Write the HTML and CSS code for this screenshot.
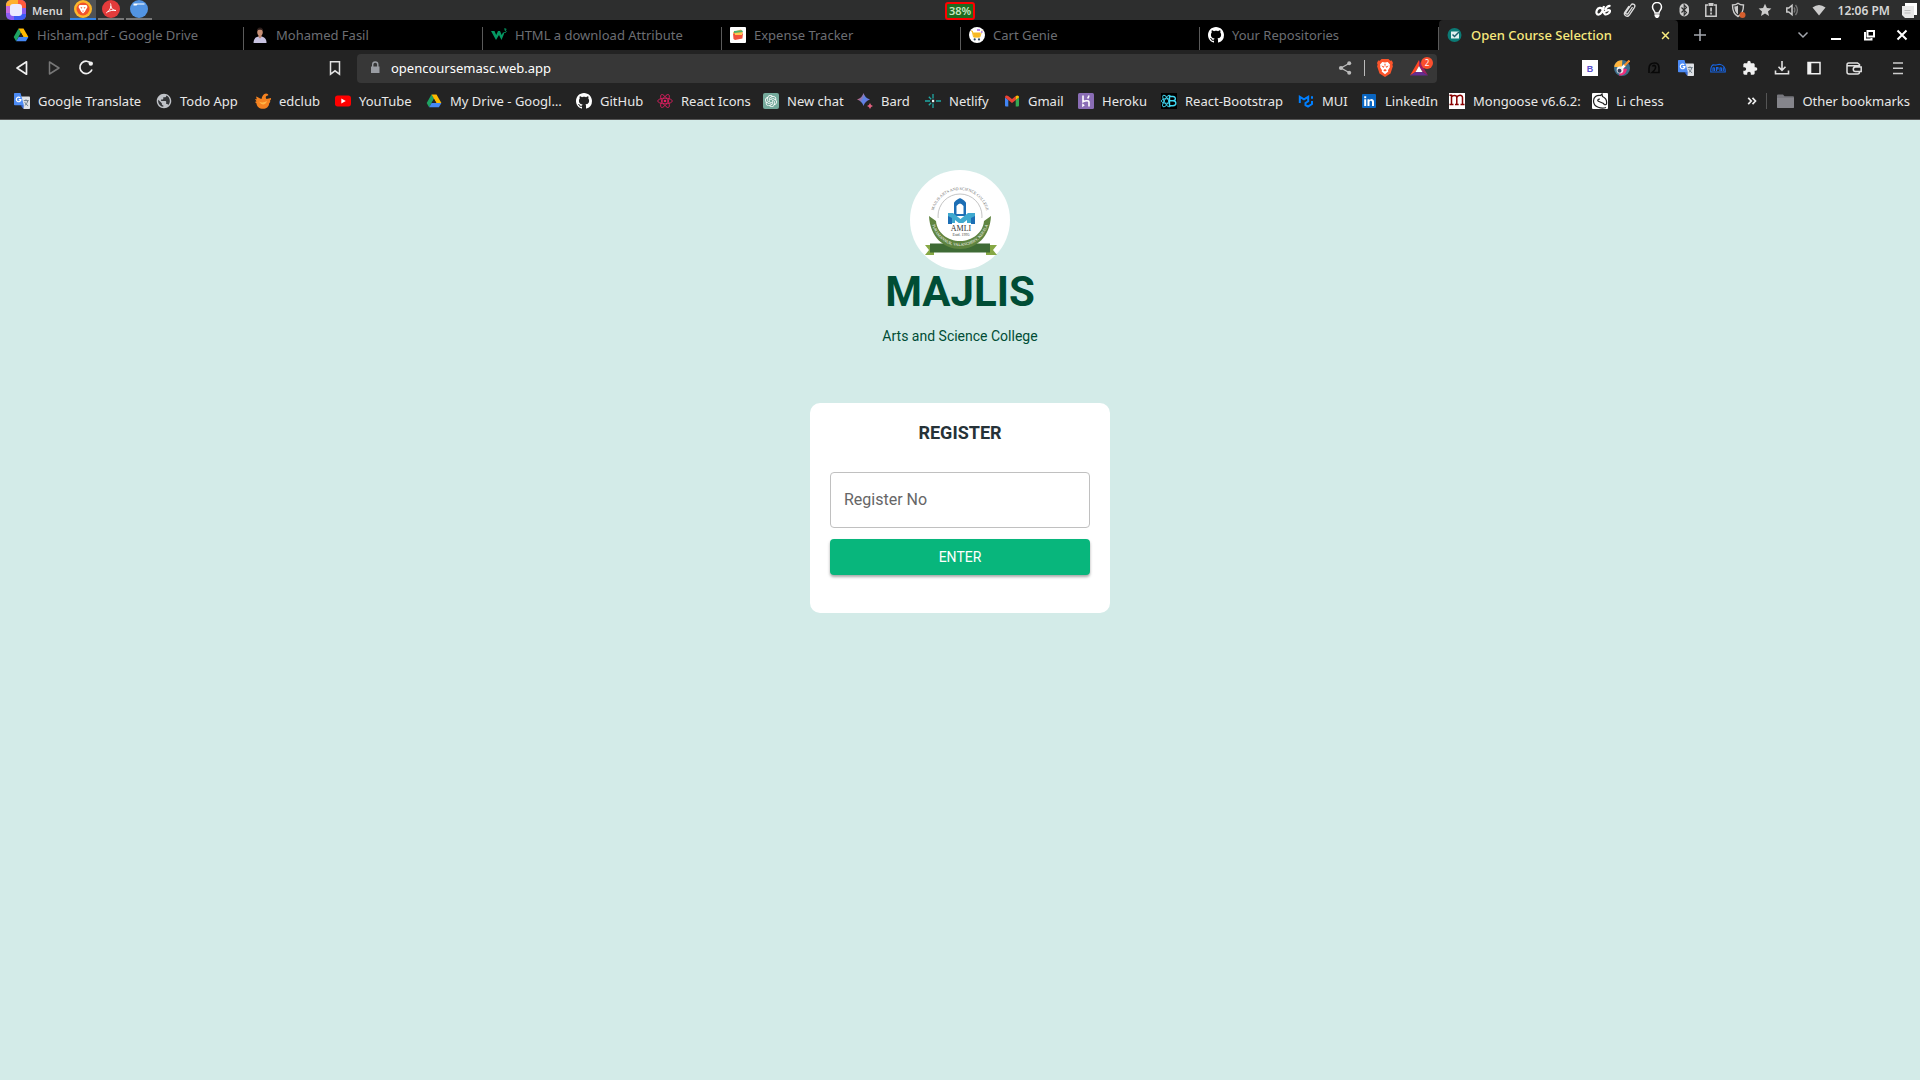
FILE: index.html
```html
<!DOCTYPE html>
<html lang="en">
<head>
<meta charset="utf-8">
<meta name="viewport" content="width=device-width, initial-scale=1">
<title>Open Course Selection</title>
<link rel="stylesheet" href="styles.css">
</head>
<body>
<svg class="sprite" aria-hidden="true">
  <symbol id="i-drive" viewBox="0 0 16 16">
    <path fill="#1ea362" d="M5.5 1.5 0.7 10l2.4 4.3L8 5.8z"/>
    <path fill="#ffba00" d="M5.5 1.5h5l4.9 8.6h-5z"/>
    <path fill="#4688f4" d="M3.1 14.3 5.6 10h9.8l-2.5 4.3z"/>
    <path fill="#232323" d="M8 5.9 10.3 10H5.6z"/>
  </symbol>
  <symbol id="i-github" viewBox="0 0 16 16">
    <path fill="#fff" d="M8 0C3.58 0 0 3.58 0 8c0 3.54 2.29 6.53 5.47 7.59.4.07.55-.17.55-.38 0-.19-.01-.82-.01-1.49-2.01.37-2.53-.49-2.69-.94-.09-.23-.48-.94-.82-1.13-.28-.15-.68-.52-.01-.53.63-.01 1.08.58 1.23.82.72 1.21 1.87.87 2.33.66.07-.52.28-.87.51-1.07-1.78-.2-3.64-.89-3.64-3.95 0-.87.31-1.59.82-2.15-.08-.2-.36-1.02.08-2.12 0 0 .67-.21 2.2.82.64-.18 1.32-.27 2-.27s1.36.09 2 .27c1.53-1.04 2.2-.82 2.2-.82.44 1.1.16 1.92.08 2.12.51.56.82 1.27.82 2.15 0 3.07-1.87 3.75-3.65 3.95.29.25.54.73.54 1.48 0 1.07-.01 1.93-.01 2.2 0 .21.15.46.55.38A8.01 8.01 0 0 0 16 8c0-4.42-3.58-8-8-8z"/>
  </symbol>
  <symbol id="i-translate" viewBox="0 0 16 16">
    <path fill="#dfe1e5" d="M6 3.5h9.2a.8.8 0 0 1 .8.8v10.9a.8.8 0 0 1-.8.8H9.5z"/>
    <path fill="none" stroke="#6b7b86" stroke-width="1" d="M9.800 7.600h4.900M12 6.400v1.200M13.800 7.600c-.4 2.200-1.700 3.900-3 4.900M10.800 9.200c.7 1.500 1.700 2.700 3.300 3.500"/>
    <path fill="#4c8bf5" d="M.8 0h5.700l3.400 12.300H.8a.8.8 0 0 1-.8-.8V.8A.8.8 0 0 1 .8 0z"/>
    <path fill="#3367d6" d="M6.600 12.300h3.300L9.300 16z"/>
    <path fill="none" stroke="#fff" stroke-width="1.200" d="M6.200 4.800A2.300 2.300 0 1 0 6.900 6.600H4.700"/>
  </symbol>
  <symbol id="i-brave" viewBox="0 0 16 18">
    <path fill="#fb542b" d="M4.500 0h7l1.700 1.700 1.600-.2L16 4l-.6 1.800.5 1.500-2.400 7.200L8 18l-5.500-3.500L.1 7.300l.5-1.500L0 4l1.200-2.500 1.600.2z"/>
    <path fill="#fff" d="M8 3.500l2.700-.6 2.300 2.500-.4 1.800.4.900-2 3.200.3 1.300L8 15.200l-3.300-2.600.3-1.300L3 8.100l.4-.9L3 5.400l2.300-2.500z"/>
    <path fill="#fb542b" d="M4.300 6.600l2.900.8-.8 1.500zM11.700 6.600l-2.900.8.800 1.500zM6.200 11.200L8 10l1.800 1.200L8 12.400zM7.300 4.800h1.400L8 8.500z"/>
  </symbol>
</svg>

<header class="panel">
  <button class="menu" type="button">
    <svg class="menu-icon" viewBox="0 0 20 20" aria-hidden="true">
      <rect width="20" height="20" rx="5" fill="#8b5cf0"/>
      <path fill="#ffb02e" d="M5 0h8v6H0V5a5 5 0 0 1 5-5z"/><path fill="#ff5a3c" d="M12 0h3a5 5 0 0 1 5 5v3h-8z"/>
      <path fill="#c56ae0" d="M0 6h6v7H0z"/><path fill="#3d5cf5" d="M8 14h12v1a5 5 0 0 1-5 5H8z"/>
      <rect x="4" y="4" width="12" height="12" rx="3" fill="#eceaff"/>
    </svg>
    Menu
  </button>
  <nav class="tasks" aria-label="Running applications">
    <button class="task task-active" type="button" aria-label="Brave">
      <svg viewBox="0 0 18 18"><circle cx="9" cy="9" r="9" fill="#fcb82c"/><circle cx="9" cy="9" r="6.500" fill="#f1532c"/><path fill="#fff" d="M5.500 5h7l1 2L11 11.500 9 13.500l-2-2L4.500 7z"/><path fill="#f1532c" d="M6.300 7l2 .5-.6 1.300zM11.700 7l-2 .5.6 1.300zM8 10.800h2l-1 .9z"/></svg>
    </button>
    <button class="task" type="button" aria-label="Document viewer">
      <svg viewBox="0 0 18 18"><circle cx="9" cy="9" r="9" fill="#e33b3b"/><path fill="none" stroke="#fff" d="M8.500 3.500c1 3 .3 6-4.300 9.500M8.700 6c.8 3 2.500 4.500 5.300 4.500-3-.6-5.500 0-8.300 1.300"/></svg>
    </button>
    <button class="task" type="button" aria-label="Files">
      <svg viewBox="0 0 18 18"><circle cx="9" cy="9" r="9" fill="#5294e2"/><path fill="#fff" d="M3.500 3.500h11v1h-7L6.500 5.500h-3z"/></svg>
    </button>
  </nav>
  <output class="battery">38%</output>
  <div class="tray">
    <svg viewBox="0 0 16 16"><path fill="none" stroke="#fff" stroke-width="2.200" d="M9 4C8 8 6.500 12 4 12.500S.8 10.500 2 8s4.500-3 5.500-.5S9 12.500 11 12.500s4-2 4-3.500-3-1-5.500 1M15.500 4c-2.500-.5-4 1-5.500 4"/></svg>
    <svg viewBox="0 0 16 16"><path fill="none" stroke="#ddd" stroke-width="1.300" d="M10.500 5 6 11.500c-1 1.300-2.800.1-2-1.300L9 3c1.600-2.200 5-.2 3.500 2.300L7.300 13c-2 2.700-6.300.2-4.400-2.900L7 4"/></svg>
    <svg viewBox="0 0 16 16"><path fill="none" stroke="#fff" stroke-width="1.500" d="M6 11c0-2-2.500-3-2.500-6a4.500 4.500 0 0 1 9 0c0 3-2.500 4-2.500 6z"/><path fill="#fff" d="M5.500 12.300h5V14l-1.500 2H7l-1.500-2z"/></svg>
    <svg viewBox="0 0 16 16"><rect x="3.500" y="1.500" width="9.500" height="13" rx="4.700" fill="#ccc"/><path fill="none" stroke="#2d2e2e" stroke-width="1.100" d="m5.500 5.500 5 5L8.200 13V3l2.300 2.500-5 5"/></svg>
    <svg viewBox="0 0 16 16"><path fill="none" stroke="#ccc" stroke-width="1.500" d="M5 3H2.800v11.200h10.400V3H11"/><path fill="#ccc" d="M5.500 1h5v3h-5zM7.200 5.500h1.700v4H7.200zM7.200 10.600h1.700v1.800H7.200z"/></svg>
    <svg viewBox="0 0 16 16"><path fill="none" stroke="#ccc" stroke-width="1.400" d="M8 1.300c1.500 1.200 3.500 1.700 5.500 1.700 0 6-1.500 9.500-5.500 11.500C4 12.500 2.500 9 2.500 3 4.500 3 6.500 2.500 8 1.300z"/><path fill="#ccc" d="M8 3.500v9C5.500 11 4.500 8 4.300 4.500 5.700 4.400 7 4.100 8 3.500z"/><circle cx="12.500" cy="13" r="3" fill="#d65f2e"/></svg>
    <svg viewBox="0 0 16 16"><path fill="#ccc" d="m8 1.700 1.900 4.200 4.500.5-3.400 3 1 4.500L8 11.600 4 13.900l1-4.500-3.400-3 4.500-.5z"/></svg>
    <svg viewBox="0 0 16 16"><path fill="none" stroke="#ccc" stroke-width="1.500" d="M2.800 6h2L8 3.300v9.400L4.800 10h-2z"/><path fill="none" stroke="#777" stroke-width="1.300" d="M10 5.500q1.800 2.500 0 5M11.500 3q3.800 5 0 10"/></svg>
    <svg viewBox="0 0 16 16"><path fill="#ccc" d="M1.500 5.500Q8 .5 14.500 5.500L8 13.500z"/></svg>
    <time class="clock">12:06 PM</time>
    <svg viewBox="0 0 16 16"><path fill="#fff" d="M4 1h12v12h-3V4H4z"/><path fill="#e8e8e8" d="M1 4h12v12H4l-3-3z"/><path stroke="#bbb" d="M3.500 8.500h6M3.500 11h6"/></svg>
  </div>
</header>

<div class="tabstrip">
  <nav class="tabs" aria-label="Tabs">
    <button class="tab" type="button"><svg class="icon" viewBox="0 0 16 16"><use href="#i-drive"/></svg>Hisham.pdf - Google Drive</button>
    <button class="tab" type="button"><svg class="icon" viewBox="0 0 16 16"><path fill="#c7c2e0" d="M1.500 16c0-4 2-6 5-6.500h3c3 .5 5 2.500 5 6.500z"/><path fill="#b98068" d="M6.500 7h3v3L8 11.500 6.500 10z"/><ellipse cx="8" cy="5" rx="2.800" ry="3.700" fill="#c68f75"/><path fill="#2b1d1a" d="M5 5c-.5-3 1-4.600 3-4.600S11.500 2 11 5c-.5-2-1-2.300-3-2.300S5.500 3 5 5z"/></svg>Mohamed Fasil</button>
    <button class="tab" type="button"><svg class="icon" viewBox="0 0 16 16"><path fill="#059862" d="M0 4h3.500l1.700 4L7 4h2l1.700 4 1.500-3 1 1.500L10.500 13 8 8l-3 5z"/><path fill="none" stroke="#059862" stroke-width="1" d="M13 2h2.200L14 3.500c2 0 1.500 2.500-.8 2"/></svg>HTML a download Attribute</button>
    <button class="tab" type="button"><svg class="icon" viewBox="0 0 16 16"><rect width="16" height="16" rx="1" fill="#fff"/><path fill="#ffb54a" d="m3 5 8-2.500 2 3.500-9 2z"/><path fill="#4caf6e" d="m4 4 8-.8 1 1.800-9 1z"/><path fill="#f0503c" d="M3 6.500h10l-.6 5L5 13l-1.500-1z"/><path fill="#ffc94f" d="M5 6h7v2H5z"/></svg>Expense Tracker</button>
    <button class="tab" type="button"><svg class="icon" viewBox="0 0 16 16"><circle cx="8" cy="8" r="8" fill="#fff"/><path fill="#f7b924" d="M3.500 5.500h8l-.9 4.800H5z"/><path fill="none" stroke="#f7b924" d="M2 4h1.300l1.200 6h6.300L13 3.500"/><circle cx="5.700" cy="12.400" r="1.100" fill="#2f4a68"/><circle cx="10" cy="12.400" r="1.100" fill="#2f4a68"/><path fill="#b98be8" d="M8 2h3v2H8zM12 4h1.500v2H12z"/></svg>Cart Genie</button>
    <button class="tab" type="button"><svg class="icon" viewBox="0 0 16 16"><use href="#i-github"/></svg>Your Repositories</button>
    <button class="tab tab-active" type="button"><svg class="icon" viewBox="0 0 16 16"><circle cx="7.500" cy="8" r="7" fill="#0b7a75"/><path fill="#dfeeee" d="M4 4.500h8v7H4z"/><path fill="none" stroke="#1d5f6b" stroke-width="1.500" d="m5.500 7.500 2 2L12 5"/></svg><span class="tab-title">Open Course Selection</span><svg class="tab-close" viewBox="0 0 10 10"><path stroke="#f9ea7e" stroke-width="1.700" d="m1.200 1.200 7.600 7.600M8.800 1.200 1.200 8.800"/></svg></button>
    <button class="new-tab" type="button" aria-label="New tab"><svg viewBox="0 0 12 12"><path stroke="#a3a6ad" stroke-width="1.600" d="M6 0v12M0 6h12"/></svg></button>
  </nav>
  <div class="window-controls">
    <button type="button" aria-label="Search tabs"><svg viewBox="0 0 12 12"><path fill="none" stroke="#a3a6ad" stroke-width="1.500" d="m1.500 3.500 4.500 4.500 4.500-4.500"/></svg></button>
    <button type="button" aria-label="Minimize"><svg viewBox="0 0 12 12"><path stroke="#fff" stroke-width="2" d="M1 10h10"/></svg></button>
    <button type="button" aria-label="Restore"><svg viewBox="0 0 12 12"><path fill="none" stroke="#fff" stroke-width="2" d="M4.500 2H11v5.500H4.500zM3 4H2v6.500h6.500V9"/></svg></button>
    <button type="button" aria-label="Close"><svg viewBox="0 0 12 12"><path stroke="#fff" stroke-width="2" d="m1.500 1.500 9 9M10.500 1.500l-9 9"/></svg></button>
  </div>
</div>

<div class="toolbar">
  <div class="nav-buttons">
    <button type="button" aria-label="Back"><svg viewBox="0 0 16 16"><path fill="none" stroke="#f0f0f0" stroke-width="1.700" stroke-linejoin="round" d="M12.500 1.800v12.400L3 8z"/></svg></button>
    <button type="button" aria-label="Forward"><svg viewBox="0 0 16 16"><path fill="none" stroke="#777" stroke-width="1.500" stroke-linejoin="round" d="M3.500 2v12L13 8z"/></svg></button>
    <button type="button" aria-label="Reload"><svg viewBox="0 0 16 16"><path fill="none" stroke="#f0f0f0" stroke-width="1.700" d="M13.200 3.800A6.200 6.200 0 1 0 14 9.500"/><circle cx="12.800" cy="3.600" r="2.200" fill="#f0f0f0"/></svg></button>
    <button class="bookmark-page" type="button" aria-label="Bookmark this page"><svg viewBox="0 0 16 16"><path fill="none" stroke="#e0e0e0" stroke-width="1.500" d="M3.500 1.800h9v12.400L8 10.800l-4.500 3.400z"/></svg></button>
  </div>
  <div class="address">
    <svg class="icon" viewBox="0 0 16 16" aria-hidden="true"><path fill="#9a9da3" d="M4 6.500h8.500V13H4z"/><path fill="none" stroke="#9a9da3" stroke-width="1.400" d="M5.700 7V4.500a2.550 2.550 0 0 1 5.100 0V7"/></svg>
    <input class="url" type="text" value="opencoursemasc.web.app" aria-label="Address">
    <button type="button" aria-label="Share"><svg viewBox="0 0 16 16"><path fill="none" stroke="#bbb" stroke-width="1.300" d="M12 3.500 4 8l8 4.500"/><circle cx="12.200" cy="3.300" r="2" fill="#bbb"/><circle cx="4" cy="8" r="2.100" fill="#bbb"/><circle cx="12.200" cy="12.700" r="2" fill="#bbb"/></svg></button>
    <span class="address-rule"></span>
    <button type="button" aria-label="Brave Shields"><svg class="shield" viewBox="0 0 16 18"><use href="#i-brave"/></svg></button>
    <button class="rewards" type="button" aria-label="Brave Rewards, 2 new"><svg class="shield" viewBox="0 0 18 18"><path fill="#ff4724" d="M9 1 0 16.500 5.500 13 9 7z"/><path fill="#9e1f63" d="M9 1v6l3.500 6 5.500 3.500z"/><path fill="#662d91" d="M0 16.500 5.500 13h7l5.500 3.500z"/><path fill="#fff" d="m9 7 3.500 6h-7z"/></svg><span class="badge">2</span></button>
  </div>
  <div class="extensions">
    <button type="button" aria-label="Extension B"><svg viewBox="0 0 16 16"><path fill="#fff" d="M0 0h16v16H0z"/><text x="8" y="11.500" class="glyph-b">B</text></svg></button>
    <button type="button" aria-label="Color picker"><svg viewBox="0 0 16 16"><circle cx="8" cy="8" r="8" fill="#3c6e8a"/><path fill="#ffb43c" d="M.3 7c0-4 4-7 8-6.700L8 7z"/><path fill="#ec2f7b" d="m7 8 6 1c-.5 4-3.500 7-8 6.500z"/><circle cx="6" cy="10" r="3.400" fill="#e8eef2"/><circle cx="5.500" cy="10.700" r="2" fill="#333a5a"/><path stroke="#fff" stroke-width="2.500" d="m8 8 3-3"/><path stroke="#f5902c" stroke-width="2.200" d="M10.500 5.500 15.500.5"/></svg></button>
    <button type="button" aria-label="Stylesheet inspector"><svg viewBox="0 0 16 16"><path fill="none" stroke="#080808" stroke-width="1.600" d="M3 13V8.500C3 5 5 3 8.500 3S13 5.500 13 8v4.500H6c2.500-2 4-4 3.500-6-.5-1.500-2.500-1.500-3 0"/></svg></button>
    <button type="button" aria-label="Google Translate"><svg viewBox="0 0 16 16"><use href="#i-translate"/></svg></button>
    <button type="button" aria-label="Incognito helper"><svg viewBox="0 0 16 16"><path fill="none" stroke="#1766e8" stroke-width="1.100" d="M.8 12C.5 6 2.500 4.500 4.500 5S8 4 10 4.500s5.500 1 5.200 7.500zM3 11V8q1.500-1 1.500 1.200V11M6.500 11V7.500H8V9H6.500M10 11V8q1.500-1 1.500 1.200V11M13.300 7.500V11"/></svg></button>
    <button type="button" aria-label="Extensions"><svg viewBox="0 0 24 24"><path fill="#f0f0f0" d="M20.500 11H19V7c0-1.100-.9-2-2-2h-4V3.500a2.500 2.500 0 0 0-5 0V5H4c-1.100 0-1.990.9-1.990 2v3.800H3.500c1.490 0 2.700 1.210 2.700 2.700s-1.210 2.700-2.700 2.700H2V20c0 1.100.9 2 2 2h3.800v-1.500c0-1.490 1.210-2.700 2.700-2.700s2.700 1.210 2.700 2.700V22H17c1.100 0 2-.9 2-2v-4h1.500a2.500 2.500 0 0 0 0-5z"/></svg></button>
    <button type="button" aria-label="Downloads"><svg viewBox="0 0 16 16"><path fill="none" stroke="#e0e0e0" stroke-width="1.600" d="M8 1v9M4.500 6.800 8 10.300l3.500-3.500M1.500 10.500v3.300h13v-3.300"/></svg></button>
    <button type="button" aria-label="Side panel"><svg viewBox="0 0 16 16"><path fill="none" stroke="#f0f0f0" stroke-width="1.500" d="M2 2.500h12v11.300H2z"/><path fill="#f0f0f0" d="M2 2.500h3.300v11.300H2z"/></svg></button>
    <button class="wallet" type="button" aria-label="Wallet"><svg viewBox="0 0 16 16"><path fill="none" stroke="#e0e0e0" stroke-width="1.500" d="M13.500 6.500V4.500L11.500 3H2.700Q1 3 1 5v7q0 2 2 2h8.500q2 0 2-2M1 5.700h12.500M9.500 7h5.700v4.500H9.500a2.250 2.250 0 0 1 0-4.500z"/></svg></button>
    <button class="main-menu" type="button" aria-label="Main menu"><svg viewBox="0 0 16 16"><path stroke="#ccc" stroke-width="1.500" d="M3 3h10M3 8.200h10M3 13.400h10"/></svg></button>
  </div>
</div>

<nav class="bookmarks" aria-label="Bookmarks">
  <div class="bookmark-list">
    <a href="#"><svg class="icon" viewBox="0 0 16 16"><use href="#i-translate"/></svg>Google Translate</a>
    <a href="#"><svg class="icon" viewBox="1 1 22 22"><circle cx="12" cy="12" r="8" fill="#343639"/><path fill="#bfc2c7" d="M12 2C6.480 2 2 6.480 2 12s4.480 10 10 10 10-4.480 10-10S17.520 2 12 2zm-1 17.930c-3.950-.49-7-3.850-7-7.930 0-.62.08-1.210.21-1.790L9 15v1c0 1.100.9 2 2 2v1.930zm6.900-2.540c-.26-.81-1-1.390-1.900-1.390h-1v-3c0-.55-.45-1-1-1H8v-2h2c.55 0 1-.45 1-1V7h2c1.100 0 2-.9 2-2v-.41c2.930 1.190 5 4.060 5 7.410 0 2.080-.8 3.970-2.100 5.390z"/></svg>Todo App</a>
    <a href="#"><svg class="icon" viewBox="0 0 16 16"><path fill="#f58220" d="M1 3.500c2 .5 3.500 2 5.500 2.500C7 3 8.500.5 11 .5c1.500 0 2.300.7 2.300 1.800L11.500 3c-1 .7-1 2 0 3L16 5c.3 1.500-.5 2-1 2.500.5 1.500 0 2-.8 2.800-.2 3.700-3 5.500-6 5.500-4 0-6.500-2.300-6.700-5.300L0 9l1.500-.7L0 6l1.800.3z"/><path fill="#ffb545" d="M4 8.500c2.500 1.500 5.500 1 8-.5-1 4-5.500 5-8 .5z"/></svg>edclub</a>
    <a href="#"><svg class="icon" viewBox="0 0 16 16"><rect y="2.500" width="16" height="11" rx="2.700" fill="#f00"/><path fill="#fff" d="m6.300 5.500 4.500 2.500-4.500 2.500z"/></svg>YouTube</a>
    <a href="#"><svg class="icon" viewBox="0 0 16 16"><use href="#i-drive"/></svg>My Drive - Googl…</a>
    <a href="#"><svg class="icon" viewBox="0 0 16 16"><use href="#i-github"/></svg>GitHub</a>
    <a href="#"><svg class="icon" viewBox="0 0 16 16"><g fill="none" stroke="#e91e63" stroke-width=".8"><ellipse cx="8" cy="8" rx="7.300" ry="2.800"/><ellipse cx="8" cy="8" rx="7.300" ry="2.800" transform="rotate(60 8 8)"/><ellipse cx="8" cy="8" rx="7.300" ry="2.800" transform="rotate(120 8 8)"/></g><circle cx="8" cy="8" r="1.300" fill="#e91e63"/></svg>React Icons</a>
    <a href="#"><svg class="icon" viewBox="-4 -4 32 32"><rect x="-4" y="-4" width="32" height="32" rx="4" fill="#74aa9c"/><path fill="#fff" d="M22.2819 9.8211a5.9847 5.9847 0 0 0-.5157-4.9108 6.0462 6.0462 0 0 0-6.5098-2.9A6.0651 6.0651 0 0 0 4.9807 4.1818a5.9847 5.9847 0 0 0-3.9977 2.9 6.0462 6.0462 0 0 0 .7427 7.0966 5.98 5.98 0 0 0 .511 4.9107 6.051 6.051 0 0 0 6.5146 2.9001A5.9847 5.9847 0 0 0 13.2599 24a6.0557 6.0557 0 0 0 5.7718-4.2058 5.9894 5.9894 0 0 0 3.9977-2.9001 6.0557 6.0557 0 0 0-.7475-7.0729zm-9.022 12.6081a4.4755 4.4755 0 0 1-2.8764-1.0408l.1419-.0804 4.7783-2.7582a.7948.7948 0 0 0 .3927-.6813v-6.7369l2.02 1.1686a.071.071 0 0 1 .038.052v5.5826a4.504 4.504 0 0 1-4.4945 4.4944zm-9.6607-4.1254a4.4708 4.4708 0 0 1-.5346-3.0137l.142.0852 4.783 2.7582a.7712.7712 0 0 0 .7806 0l5.8428-3.3685v2.3324a.0804.0804 0 0 1-.0332.0615L9.74 19.9502a4.4992 4.4992 0 0 1-6.1408-1.6464zM2.3408 7.8956a4.485 4.485 0 0 1 2.3655-1.9728V11.6a.7664.7664 0 0 0 .3879.6765l5.8144 3.3543-2.0201 1.1685a.0757.0757 0 0 1-.071 0l-4.8303-2.7865A4.504 4.504 0 0 1 2.3408 7.872zm16.5963 3.8558L13.1038 8.364 15.1192 7.2a.0757.0757 0 0 1 .071 0l4.8303 2.7913a4.4944 4.4944 0 0 1-.6765 8.1042v-5.6772a.79.79 0 0 0-.407-.667zm2.0107-3.0231l-.142-.0852-4.7735-2.7818a.7759.7759 0 0 0-.7854 0L9.409 9.2297V6.8974a.0662.0662 0 0 1 .0284-.0615l4.8303-2.7866a4.4992 4.4992 0 0 1 6.6802 4.66zM8.3065 12.863l-2.02-1.1638a.0804.0804 0 0 1-.038-.0567V6.0742a4.4992 4.4992 0 0 1 7.3757-3.4537l-.142.0805L8.704 5.459a.7948.7948 0 0 0-.3927.6813zm1.0976-2.3654l2.602-1.4998 2.6069 1.4998v2.9994l-2.5974 1.4997-2.6067-1.4997Z"/></svg>New chat</a>
    <a href="#"><svg class="icon" viewBox="0 0 16 16"><defs><linearGradient id="bard" x1="0" x2="1" y1=".2" y2=".8"><stop offset=".1" stop-color="#d9616b"/><stop offset=".5" stop-color="#5a86e8"/><stop offset="1" stop-color="#7a6ad8"/></linearGradient></defs><path fill="url(#bard)" d="M6.500 0Q8 5 13 6.500 8 8 6.500 13 5 8 0 6.500 5 5 6.500 0z"/><path fill="#e0607e" d="M13 10q.7 2.300 3 3-2.300.7-3 3-.7-2.300-3-3 2.300-.7 3-3z"/></svg>Bard</a>
    <a href="#"><svg class="icon" viewBox="0 0 16 16"><path stroke="#1fa9a5" stroke-width="1.300" d="M8 1v4.500M8 10.500V15M0 8h5M11 8h5M3.800 12.200l2.400-2.400M3.800 3.800l2.400 2.400"/><path fill="#e8f5f5" d="M7 6.800h2.200V9.200H7z"/></svg>Netlify</a>
    <a href="#"><svg class="icon" viewBox="0 0 16 16"><path fill="#4285f4" d="M1 4.500 4.300 7v6.500H2a1 1 0 0 1-1-1z"/><path fill="#34a853" d="M11.700 7 15 4.500v8a1 1 0 0 1-1 1h-2.300z"/><path fill="#ea4335" d="M1 4.500c0-2 1.800-2.500 3.200-1.400L8 6l3.800-2.900v3.900L8 10 4.300 7z"/><path fill="#fbbc04" d="M11.700 3.200C13.200 2 15 2.700 15 4.500L11.700 7z"/></svg>Gmail</a>
    <a href="#"><svg class="icon" viewBox="0 0 16 16"><rect width="16" height="16" rx="1.500" fill="#8a6db5"/><path fill="none" stroke="#fff" stroke-width="1.600" d="M5 2.500v6.300c2-1 6-2 6 .5v4.200M10.800 2.500q0 1.500-1.200 3"/><path fill="#fff" d="m4.200 10.300 2.600 2-2.600 2z"/></svg>Heroku</a>
    <a href="#"><svg class="icon" viewBox="0 0 16 16"><path d="M0 0h16v16H0z"/><g fill="none" stroke="#41d7f2" stroke-width=".9"><ellipse cx="5.500" cy="8" rx="5" ry="2.300"/><ellipse cx="5.500" cy="8" rx="6.500" ry="2.200" transform="rotate(60 5.500 8)"/><ellipse cx="5.500" cy="8" rx="6.500" ry="2.200" transform="rotate(120 5.500 8)"/></g><path fill="#000" stroke="#41d7f2" stroke-width="1.400" d="M8.500 3.500H12c3.300 0 3 4.300 0 4.300 3.800 0 3.800 4.900 0 4.900H8.500zM8.500 7.800H12"/></svg>React-Bootstrap</a>
    <a href="#"><svg class="icon" viewBox="0 0 16 16"><path fill="none" stroke="#007fff" stroke-width="2" d="M1.800 10V3.800L6 6.300l4.200-2.500v4.500L7.500 10v2.200L10 13.500l4-2.500V8"/><path fill="#007fff" d="M13 3.200h2v2.500h-2z"/></svg>MUI</a>
    <a href="#"><svg class="icon" viewBox="0 0 16 16"><rect x="1" y="1" width="14" height="14" rx="1" fill="#0a66c2"/><path fill="#fff" d="M3.200 6.200h2V13h-2zM3.200 3.200h2v2h-2zM6.500 6.200h2v1c1.500-2 4.500-1.200 4.500 1.500V13h-2V9.300c0-2-2.500-2-2.500 0V13h-2z"/></svg>LinkedIn</a>
    <a href="#"><svg class="icon" viewBox="0 0 16 16"><path fill="#fff" d="M0 0h16v16H0z"/><path fill="none" stroke="#800" stroke-width="1.500" d="M.5 2.200h2v9.500M2.500 4c1-2 5.300-2.500 5.300.5v7M7.800 4.500c1-2.700 5.700-3 5.700 0v7M.5 11.500h4M6 11.500h3.700M11.500 11.500h4"/></svg>Mongoose v6.6.2:</a>
    <a href="#"><svg class="icon" viewBox="0 0 16 16"><rect width="16" height="16" rx="1" fill="#fff"/><path fill="none" stroke="#222" stroke-width="1.200" d="M14 14.500C10 16 1.500 14.500 1.500 8c0-4 3-6 7-5.500L10 1l.5 2.500C14 5 15 8 14.500 11c-1.500 1.500-2.500.5-3-.5L7 8.500c-2-.5-1.500-2.500 1-2.500"/></svg>Li chess</a>
  </div>
  <button class="more" type="button" aria-label="More bookmarks"><svg viewBox="0 0 10 10"><path fill="none" stroke="#eee" stroke-width="1.700" d="m1.200 1.800 3 3.200-3 3.200M5.500 1.800l3 3.200-3 3.200"/></svg></button>
  <a class="other" href="#"><svg class="folder" viewBox="0 0 17 14"><path fill="#77777d" d="M0 1.500Q0 .5 1 .5h5l1.500 1.800H16q1 0 1 1V13q0 1-1 1H1q-1 0-1-1z"/><path fill="#85858b" d="M0 4h17v9q0 1-1 1H1q-1 0-1-1z"/></svg>Other bookmarks</a>
</nav>

<main class="page">
  <svg class="crest" viewBox="0 0 100 100" role="img" aria-label="AMLI crest">
    <defs>
      <path id="arc-top" d="M23 49V47a27 27 0 0 1 54 0v2"/>
      <path id="arc-bottom" d="M21 49C23 66 36 76 50 76S77 66 79 49"/>
    </defs>
    <circle cx="50" cy="50" r="50" fill="#fff"/>
    <circle cx="50" cy="46" r="22" fill="none" stroke="#aaa" stroke-width=".7"/>
    <path fill="#86a844" d="M15 75h9v10H15l4-5zM87 75H76v10h11l-4-5z"/>
    <path fill="#3f6b35" d="M20 73.500h60v9H20z"/>
    <path fill="#fff" d="M24 48h52v8C72 66 62 72 50 72S28 66 24 56z"/>
    <path fill="#5f8440" d="M19 46c1 21 15 33 31 33s30-12 31-33l-7 5c-1 12-12 20-24 20s-23-8-24-20z"/>
    <path fill="#1c6eb5" d="M44 46V33c0-2 6-5 6-5s6 3 6 5v13z"/>
    <path fill="#fff" d="M46.500 44V36q3.500-5 7 0v8z"/>
    <path fill="#3fa9cf" d="M38 43h5l7.500 6 7.500-6h7v10H38z"/>
    <path fill="#1c6eb5" d="M38 46l4 2v6h-4zM65 46l-4 2v6h4z"/>
    <path fill="#fff" d="M45 50l5 4h-5zM57 50l-5 4h5z"/>
    <text x="51" y="61" class="crest-name">AMLI</text>
    <text x="51" y="66" class="crest-year">Estd. 1995</text>
    <text class="crest-ring"><textPath href="#arc-top" startOffset="50%">MAJLIS ARTS AND SCIENCE COLLEGE</textPath></text>
    <text class="crest-ribbon"><textPath href="#arc-bottom" startOffset="50%">PURAMANNUR, VALANCHERY, KERALA</textPath></text>
  </svg>
  <h1 class="name">MAJLIS</h1>
  <p class="tagline">Arts and Science College</p>
  <form class="card">
    <h2 class="card-title">REGISTER</h2>
    <div class="field">
      <input class="field-input" id="register-no" type="text">
      <label class="field-label" for="register-no">Register No</label>
    </div>
    <button class="submit" type="button">ENTER</button>
  </form>
</main>
</body>
</html>
```
FILE: styles.css
```css
* {
  box-sizing: border-box;
}

body {
  margin: 0;
  min-height: 100vh;
  display: flex;
  flex-direction: column;
  background: #d3ebe8;
  font-family: "Noto Sans", sans-serif;
  font-size: 13px;
}

button,
input {
  font: inherit;
  color: inherit;
  border: 0;
  padding: 0;
  background: none;
}

a {
  color: inherit;
  text-decoration: none;
}

svg {
  display: block;
  flex: none;
}

.sprite {
  position: absolute;
  width: 0;
  height: 0;
}

.icon {
  width: 16px;
  height: 16px;
}

/* Desktop panel */
.panel {
  display: grid;
  grid-template-columns: 1fr auto 1fr;
  grid-template-areas: "left battery tray";
  height: 20px;
  background: #2d2e2e;
  color: #d6d6d6;
  font-size: 11px;
  font-weight: 600;
}

.menu {
  grid-area: left;
  justify-self: start;
  display: flex;
  align-items: center;
  gap: 6px;
  padding-left: 6px;
}

.menu-icon {
  width: 20px;
  height: 20px;
}

.tasks {
  grid-area: left;
  justify-self: start;
  display: flex;
  gap: 2px;
  margin-left: 70px;
}

.task {
  display: flex;
  align-items: center;
  justify-content: center;
  width: 26px;
  border-bottom: 2px solid #777;
}

.task svg {
  width: 18px;
  height: 18px;
}

.task-active {
  background: #505254;
  border-color: #3584e4;
}

.battery {
  grid-area: battery;
  align-self: end;
  height: 18px;
  width: 30px;
  border: 2px solid #f00;
  border-radius: 3px;
  background: #1f6b1f;
  color: #c8e6c0;
  line-height: 14px;
  text-align: center;
}

.tray {
  grid-area: tray;
  justify-self: end;
  display: flex;
  align-items: center;
  gap: 11px;
  padding-right: 3px;
}

.tray svg {
  width: 16px;
  height: 16px;
}

.clock {
  font-size: 12px;
}

/* Tab strip */
.tabstrip {
  display: flex;
  justify-content: space-between;
  height: 30px;
  background: #000;
  color: #6c6e73;
}

.tabs {
  display: flex;
  flex: 1;
  min-width: 0;
  padding-left: 5px;
}

.tab {
  display: flex;
  align-items: center;
  flex: 0 1 239px;
  gap: 8px;
  min-width: 0;
  padding: 0 8px;
  white-space: nowrap;
  background: linear-gradient(#5a5a5a, #5a5a5a) right bottom / 1px 23px no-repeat;
}

.tab-active {
  background: #232323;
  border-radius: 4px 4px 0 0;
  color: #f9ea7e;
  font-weight: 500;
}

.tab-title {
  flex: 1;
  text-align: left;
}

.tab-close {
  width: 9px;
  height: 9px;
}

.new-tab {
  padding: 0 16px;
}

.new-tab svg,
.window-controls svg {
  width: 12px;
  height: 12px;
}

.window-controls {
  display: flex;
  align-items: center;
  gap: 21px;
  padding-right: 12px;
}

/* Toolbar */
.toolbar {
  display: grid;
  grid-template-columns: 357px minmax(0, 1fr) 483px;
  align-items: center;
  height: 36px;
  background: #232323;
}

.nav-buttons,
.extensions {
  display: flex;
  align-items: center;
  gap: 16px;
}

.nav-buttons svg,
.address button svg,
.extensions svg {
  width: 16px;
  height: 16px;
}

.nav-buttons {
  padding: 0 14px;
}

.bookmark-page {
  margin-left: auto;
}

.address {
  display: flex;
  align-items: center;
  gap: 8px;
  height: 29px;
  padding: 0 9px 0 10px;
  border-radius: 4px;
  background: #373737;
}

.url {
  flex: 1;
  min-width: 0;
  color: #fff;
  font-size: 13px;
}

.address-rule {
  width: 1px;
  height: 16px;
  margin: 0 3px;
  background: #bbb;
}

.address button .shield {
  width: 18px;
  height: 18px;
}

.rewards {
  position: relative;
  margin-left: 8px;
}

.badge {
  position: absolute;
  top: -2px;
  right: -5px;
  width: 12px;
  height: 12px;
  border-radius: 50%;
  background: #fb4f2e;
  color: #fff;
  font-size: 8px;
  line-height: 12px;
  text-align: center;
}

.extensions {
  justify-content: flex-end;
  padding-right: 14px;
}

.wallet {
  margin-left: 8px;
}

.main-menu {
  margin-left: 12px;
}

.glyph-b {
  fill: #5a4fcf;
  font: 700 9px "Liberation Sans", sans-serif;
  text-anchor: middle;
}

/* Bookmarks bar */
.bookmarks {
  display: flex;
  align-items: center;
  height: 34px;
  padding: 0 10px 4px 14px;
  border-bottom: 1px solid #555;
  background: #232323;
  color: #e8e8e8;
  white-space: nowrap;
}

.bookmark-list {
  display: grid;
  grid-template-columns: 142px 99px 80px 91px 150px 81px 106px 94px 68px 79px 74px 83px 137px 63px 88px 143px auto;
  flex: 1;
  min-width: 0;
  overflow: hidden;
}

.bookmarks a {
  display: flex;
  align-items: center;
  gap: 8px;
}

.more {
  padding-right: 9px;
}

.more svg {
  width: 10px;
  height: 10px;
}

.other {
  padding-left: 10px;
  border-left: 1px solid #555;
  line-height: 16px;
}

.folder {
  width: 17px;
  height: 14px;
}

/* Registration page */
.page {
  display: flex;
  flex-direction: column;
  align-items: center;
  padding: 50px 20px;
  font-family: Roboto, sans-serif;
  color: #004d35;
}

.crest {
  width: 100px;
  height: 100px;
}

.crest text {
  font-family: "Liberation Serif", serif;
  font-size: 4px;
  text-anchor: middle;
}

.crest .crest-name {
  fill: #333;
  font-size: 8px;
}

.crest-year {
  fill: #444;
}

.crest-ring {
  fill: #666;
}

.crest-ribbon {
  fill: #fff;
}

.name {
  margin: 0;
  font-size: 42px;
  font-weight: 700;
  line-height: 44px;
}

.tagline {
  margin: 10px 0 0;
  font-size: 14px;
  line-height: 24px;
}

.card {
  display: flex;
  flex-direction: column;
  width: 300px;
  max-width: 100%;
  margin-top: 55px;
  padding: 20px 20px 38px;
  border-radius: 10px;
  background: #fff;
}

.card-title {
  margin: 0;
  color: #263238;
  font-size: 18px;
  font-weight: 700;
  line-height: 20px;
  text-align: center;
}

.field {
  position: relative;
  margin-top: 29px;
}

.field-input {
  display: block;
  width: 100%;
  height: 56px;
  padding: 0 13px;
  border: 1px solid #c0c0c0;
  border-radius: 4px;
  color: #222;
  font-size: 16px;
}

.field-label {
  position: absolute;
  top: 16px;
  left: 14px;
  color: #666;
  font-size: 16px;
  line-height: 24px;
}

.submit {
  height: 36px;
  margin-top: 11px;
  border-radius: 4px;
  background: #08b67c;
  box-shadow: 0 2px 3px rgba(0, 0, 0, 0.35);
  color: #fff;
  font-size: 14px;
}
```
